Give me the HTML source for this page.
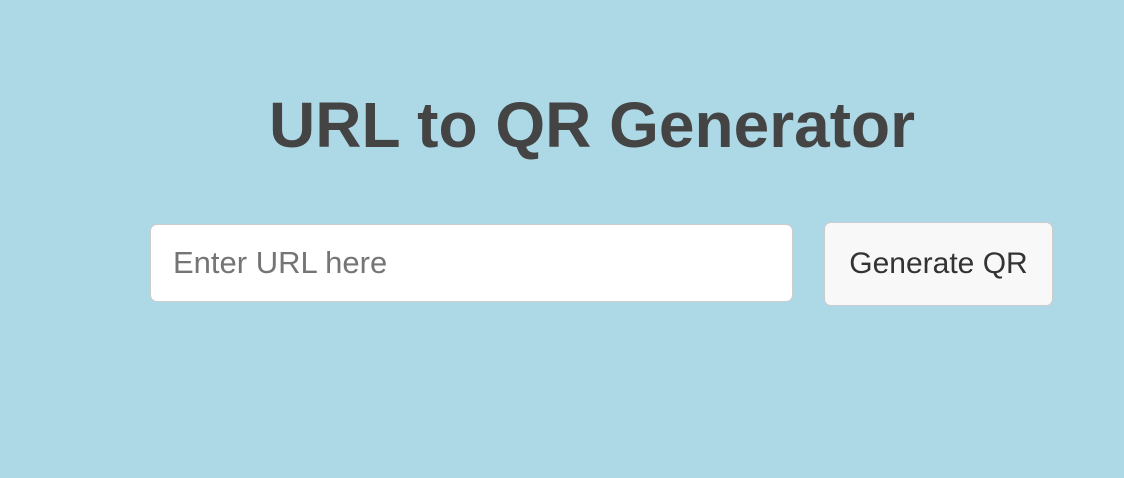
<!DOCTYPE html>
<html><head><style>
html,body{margin:0;padding:0;width:1124px;height:478px;background:#add8e6;overflow:hidden;font-family:"Liberation Sans",Arial,sans-serif;}
h1{position:absolute;left:0;width:1184px;top:80px;margin:0;text-align:center;font-size:64px;font-weight:bold;color:#444;line-height:90px;}
.in{position:absolute;left:150px;top:224px;width:641px;height:76px;background:#fff;border:1px solid #ccc;border-radius:7px;box-sizing:content-box;}
.in span{position:absolute;left:22px;top:0;line-height:76px;font-size:31px;color:#757575;}
.bt{position:absolute;left:824px;top:222px;width:227px;height:82px;background:#f8f8f8;border:1px solid #ccc;border-radius:7px;}
.bt span{position:absolute;left:0;width:100%;text-align:center;line-height:82px;font-size:30px;color:#333;}
</style></head><body>
<h1>URL to QR Generator</h1>
<div class="in"><span>Enter URL here</span></div>
<div class="bt"><span>Generate QR</span></div>
</body></html>
